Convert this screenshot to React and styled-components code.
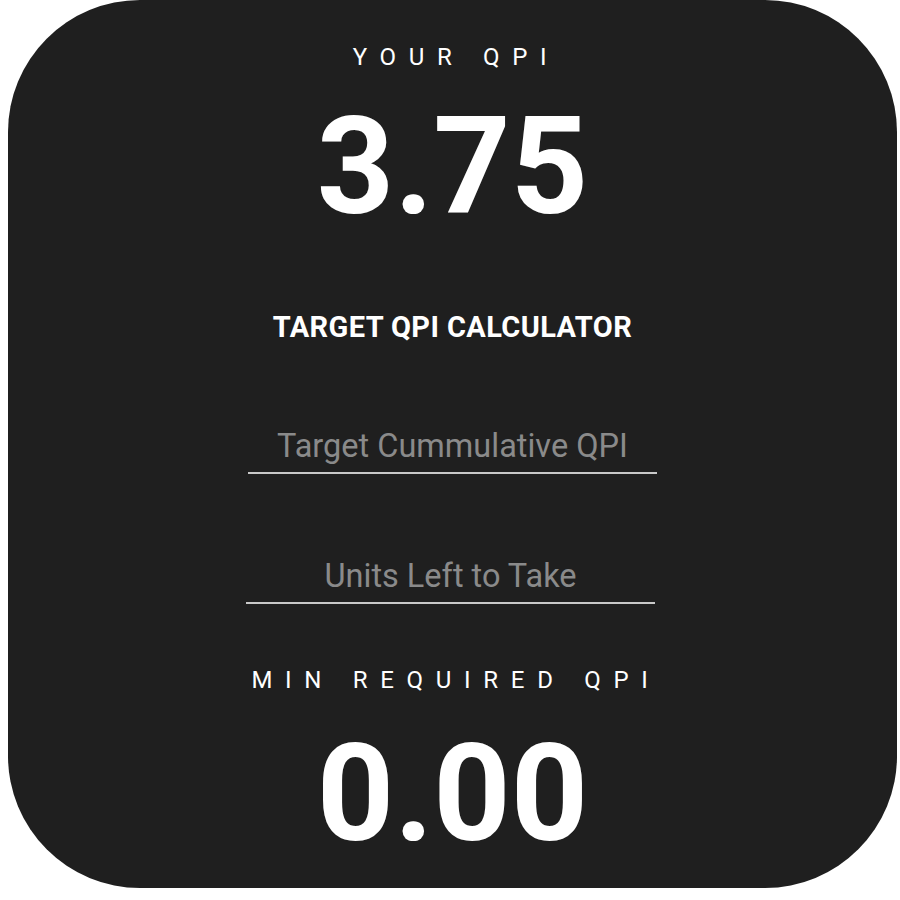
import React from "react";
import styled, { createGlobalStyle } from "styled-components";

const GlobalStyle = createGlobalStyle`
  body {
    margin: 0;
    background: #ffffff;
    font-family: Roboto, "Liberation Sans", sans-serif;
  }
`;

const Page = styled.div`
  padding: 0 8px;
`;

const Card = styled.div`
  width: 889px;
  height: 888px;
  box-sizing: border-box;
  background: #1f1f1f;
  border-radius: 132px;
  display: flex;
  flex-direction: column;
  align-items: center;
  padding-top: 45px;
  color: #ffffff;
`;

const Label = styled.div`
  font-size: 24px;
  line-height: 1;
  letter-spacing: 12.7px;
  padding-left: 7px;
  margin-top: ${(p) => p.$top || 0}px;
`;

const BigNumber = styled.div`
  font-size: 135px;
  font-weight: 700;
  line-height: 1;
  margin-top: ${(p) => p.$top || 0}px;
`;

const Heading = styled.h2`
  margin: 78px 0 0;
  font-size: 29px;
  font-weight: 700;
  line-height: 1;
  letter-spacing: 0.4px;
`;

const Field = styled.input`
  display: block;
  width: 409px;
  height: 44px;
  box-sizing: border-box;
  margin: ${(p) => p.$top || 0}px 0 0 ${(p) => p.$shift || 0}px;
  padding: 0 0 10px;
  background: transparent;
  border: none;
  border-bottom: 2px solid #c9c9c9;
  outline: none;
  color: #ffffff;
  font-family: Roboto, "Liberation Sans", sans-serif;
  font-size: 32.5px;
  line-height: 1;
  text-align: center;

  &::placeholder {
    color: #8a8a8a;
  }
`;

export default function App() {
  return (
    <Page>
      <GlobalStyle />
      <Card>
        <Label>YOUR QPI</Label>
        <BigNumber $top={31}>3.75</BigNumber>
        <Heading>TARGET QPI CALCULATOR</Heading>
        <Field $top={88} placeholder="Target Cummulative QPI" />
        <Field $top={86} $shift={-4} placeholder="Units Left to Take" />
        <Label $top={64}>MIN REQUIRED QPI</Label>
        <BigNumber $top={35}>0.00</BigNumber>
      </Card>
    </Page>
  );
}
